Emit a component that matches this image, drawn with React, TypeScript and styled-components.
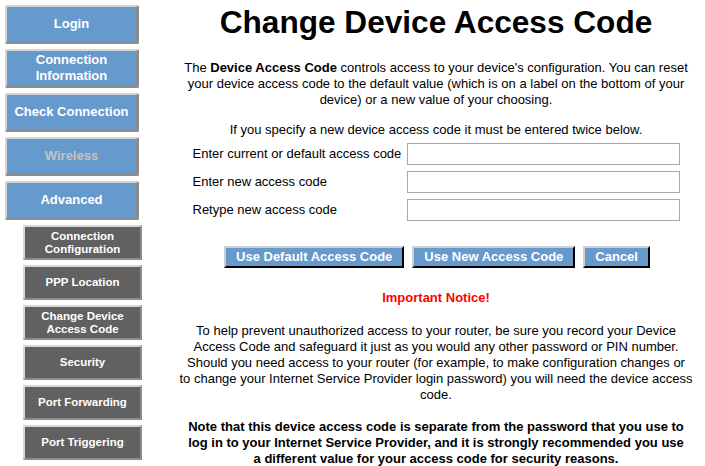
import React from "react";
import styled, { createGlobalStyle } from "styled-components";

const Global = createGlobalStyle`
  html, body { margin: 0; padding: 0; background: #fff; }
  body { font-family: "Liberation Sans", Arial, sans-serif; color: #000; }
`;

const Page = styled.div`
  display: flex;
  align-items: flex-start;
  width: 705px;
`;

const Nav = styled.nav`
  display: flex;
  flex-direction: column;
  padding: 5px 0 0 5px;
  width: 170px;
  box-sizing: border-box;
`;

const NavButton = styled.div<{ $disabled?: boolean }>`
  box-sizing: border-box;
  width: 134px;
  height: 39px;
  margin-bottom: 5px;
  background: #6699cc;
  border-style: solid;
  border-width: 2px 3px 3px 2px;
  border-color: #d6d6d6 #8c8c8c #8c8c8c #d6d6d6;
  border-radius: 2px;
  display: flex;
  align-items: center;
  justify-content: center;
  text-align: center;
  font-weight: bold;
  font-size: 13px;
  line-height: 16px;
  color: ${(p) => (p.$disabled ? "#c4c4c4" : "#ffffff")};
`;

const SubList = styled.div`
  display: flex;
  flex-direction: column;
  padding-left: 18px;
  margin-top: 0;
`;

const SubButton = styled.div`
  box-sizing: border-box;
  width: 119px;
  height: 35px;
  margin-bottom: 5px;
  background: #616161;
  border-style: solid;
  border-width: 2px 2px 2px 2px;
  border-color: #d6d6d6 #8c8c8c #8c8c8c #d6d6d6;
  display: flex;
  align-items: center;
  justify-content: center;
  text-align: center;
  font-weight: bold;
  font-size: 11.5px;
  line-height: 13px;
  color: #fff;
`;

const Main = styled.main`
  width: 522px;
  margin-left: 5px;
  display: flex;
  flex-direction: column;
  align-items: center;
  text-align: center;
  font-size: 13px;
  line-height: 16px;
`;

const Title = styled.h1`
  margin: 4px 0 0 0;
  font-size: 31.6px;
  line-height: 37px;
  font-weight: bold;
`;

const Para = styled.p<{ $bold?: boolean; $top?: number }>`
  margin: ${(p) => p.$top ?? 0}px 0 0 0;
  font-weight: ${(p) => (p.$bold ? "bold" : "normal")};
`;

const FormTable = styled.div`
  display: grid;
  grid-template-columns: 214px 273px;
  row-gap: 6px;
  margin-top: 5px;
  text-align: left;
`;

const Label = styled.label`
  display: flex;
  align-items: center;
  height: 22px;
`;

const Input = styled.input`
  box-sizing: border-box;
  width: 273px;
  height: 22px;
  border: 1px solid #a8a8a8;
  margin: 0;
  padding: 0 3px;
  font-family: inherit;
  font-size: 13px;
`;

const ButtonRow = styled.div`
  display: flex;
  gap: 8px;
  margin-top: 25px;
  margin-left: 2px;
`;

const ActionButton = styled.button`
  box-sizing: border-box;
  height: 22px;
  padding: 0 10px;
  background: #6699cc;
  border-style: solid;
  border-width: 2px;
  border-color: #cfcfcf #000 #000 #cfcfcf;
  color: #fff;
  font-family: inherit;
  font-weight: bold;
  font-size: 13px;
  line-height: 16px;
`;

const Notice = styled.div`
  margin-top: 22px;
  color: #ff0000;
  font-weight: bold;
`;

const navItems = [
  { label: "Login" },
  { label: "Connection\nInformation" },
  { label: "Check Connection" },
  { label: "Wireless", disabled: true },
  { label: "Advanced" },
];

const subItems = [
  "Connection\nConfiguration",
  "PPP Location",
  "Change Device\nAccess Code",
  "Security",
  "Port Forwarding",
  "Port Triggering",
];

const Lines = ({ text }: { text: string }) => (
  <span>
    {text.split("\n").map((t, i) => (
      <React.Fragment key={i}>
        {i > 0 && <br />}
        {t}
      </React.Fragment>
    ))}
  </span>
);

export default function App() {
  return (
    <>
      <Global />
      <Page>
        <Nav>
          {navItems.map((n) => (
            <NavButton key={n.label} $disabled={n.disabled}>
              <Lines text={n.label} />
            </NavButton>
          ))}
          <SubList>
            {subItems.map((s) => (
              <SubButton key={s}>
                <Lines text={s} />
              </SubButton>
            ))}
          </SubList>
        </Nav>
        <Main>
          <Title>Change Device Access Code</Title>
          <Para $top={19}>
            The <b>Device Access Code</b> controls access to your device's configuration. You can reset
            <br />
            your device access code to the default value (which is on a label on the bottom of your
            <br />
            device) or a new value of your choosing.
          </Para>
          <Para $top={14}>If you specify a new device access code it must be entered twice below.</Para>
          <FormTable>
            <Label>Enter current or default access code</Label>
            <Input type="password" />
            <Label>Enter new access code</Label>
            <Input type="password" />
            <Label>Retype new access code</Label>
            <Input type="password" />
          </FormTable>
          <ButtonRow>
            <ActionButton>Use Default Access Code</ActionButton>
            <ActionButton>Use New Access Code</ActionButton>
            <ActionButton>Cancel</ActionButton>
          </ButtonRow>
          <Notice>Important Notice!</Notice>
          <Para $top={17}>
            To help prevent unauthorized access to your router, be sure you record your Device
            <br />
            Access Code and safeguard it just as you would any other password or PIN number.
            <br />
            Should you need access to your router (for example, to make configuration changes or
            <br />
            to change your Internet Service Provider login password) you will need the device access
            <br />
            code.
          </Para>
          <Para $bold $top={16}>
            Note that this device access code is separate from the password that you use to
            <br />
            log in to your Internet Service Provider, and it is strongly recommended you use
            <br />a different value for your access code for security reasons.
          </Para>
        </Main>
      </Page>
    </>
  );
}
